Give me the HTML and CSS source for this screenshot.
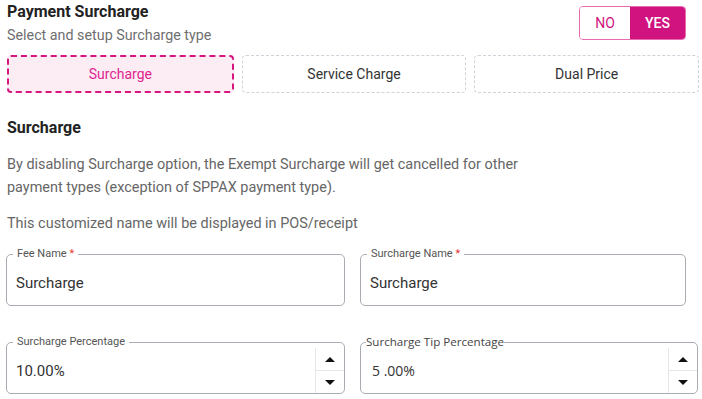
FILE: index.html
```html
<!DOCTYPE html>
<html lang="en">
<head>
    <meta charset="UTF-8">
    <meta name="viewport" content="width=device-width, initial-scale=1.0">
    <title>Payment Surcharge</title>
    <link rel="stylesheet" href="styles.css">
</head>
<body>
    <div id="page">
        <div class="header">
            <div>
                <h2 class="title">Payment Surcharge</h2>
                <p class="subtitle">Select and setup Surcharge type</p>
            </div>
            <div class="toggle">
                <button type="button" class="toggle_btn">NO</button>
                <button type="button" class="toggle_btn active">YES</button>
            </div>
        </div>

        <div class="tabs">
            <div class="tab selected">Surcharge</div>
            <div class="tab">Service Charge</div>
            <div class="tab">Dual Price</div>
        </div>

        <h3 class="section_title">Surcharge</h3>
        <p class="info">By disabling Surcharge option, the Exempt Surcharge will get cancelled for other<br>payment types (exception of SPPAX payment type).</p>
        <p class="info">This customized name will be displayed in POS/receipt</p>

        <div class="fields">
            <fieldset class="field">
                <legend>Fee Name <span class="req">*</span></legend>
                <div class="value">Surcharge</div>
            </fieldset>
            <fieldset class="field narrow">
                <legend>Surcharge Name <span class="req">*</span></legend>
                <div class="value">Surcharge</div>
            </fieldset>
            <fieldset class="field spin">
                <legend>Surcharge Percentage</legend>
                <div class="value">10.00%</div>
                <div class="spinner">
                    <span class="arrow up"></span>
                    <span class="arrow down"></span>
                </div>
            </fieldset>
            <fieldset class="field spin tip">
                <legend>Surcharge Tip Percentage</legend>
                <div class="value">5 .00%</div>
                <div class="spinner">
                    <span class="arrow up"></span>
                    <span class="arrow down"></span>
                </div>
            </fieldset>
        </div>
    </div>
</body>
</html>
```

FILE: styles.css
```css
body, html {
    margin: 0;
    background: #fff;
    font-family: Roboto, "Liberation Sans", sans-serif;
}

#page {
    width: 692px;
    padding-left: 7px;
}

.header {
    display: flex;
    justify-content: space-between;
    align-items: flex-start;
    padding-top: 2px;
}

.title {
    margin: 0;
    font-size: 16px;
    line-height: 20px;
    font-weight: 700;
    color: #222;
}

.subtitle {
    margin: 3px 0 0;
    font-size: 14.3px;
    line-height: 20px;
    color: #6f6f6f;
}

.toggle {
    display: flex;
    margin-top: 4px;
    margin-right: 13px;
    border: 1px solid #e86bb0;
    border-radius: 4px;
    overflow: hidden;
}

.toggle_btn {
    border: none;
    background: #fff;
    color: #d0137f;
    font-family: Roboto, "Liberation Sans", sans-serif;
    font-size: 14px;
    height: 32px;
    width: 50px;
    padding: 0;
}

.toggle_btn.active {
    width: 55px;
    background: #d0137f;
    color: #fff;
    font-weight: 500;
}

.tabs {
    display: flex;
    gap: 8px;
    margin-top: 10px;
}

.tab {
    flex: 1;
    height: 38px;
    box-sizing: border-box;
    display: flex;
    align-items: center;
    justify-content: center;
    border: 1px dashed #cfd3d9;
    border-radius: 4px;
    font-size: 14px;
    color: #333;
}

.tab.selected {
    border: 2px dashed #d6157f;
    background: #fcedf5;
    color: #e0248f;
}

.section_title {
    margin: 25px 0 0;
    font-size: 16px;
    line-height: 20px;
    font-weight: 700;
    color: #222;
}

.info {
    margin: 15px 0 0;
    font-size: 14.45px;
    line-height: 23px;
    color: #666;
}

.info + .info {
    margin-top: 13px;
}

.fields {
    display: grid;
    grid-template-columns: 339px 338px;
    column-gap: 15px;
    row-gap: 30px;
    margin-top: 13px;
    margin-left: -1px;
}

.field {
    position: relative;
    margin: 0;
    padding: 0 9px;
    height: 58px;
    box-sizing: border-box;
    border: 1px solid #a9adb3;
    border-radius: 5px;
    min-width: 0;
}

.field.narrow {
    width: 326px;
}

.field legend {
    padding: 0 4px;
    margin-left: -3px;
    font-size: 11px;
    line-height: 12px;
    color: #555;
}

.req {
    color: #e53935;
}

.value {
    margin-top: 13px;
    font-size: 15px;
    line-height: 20px;
    color: #333;
}

.field.tip legend {
    font-family: "Open Sans", sans-serif;
    font-size: 11.6px;
    color: #444;
    padding: 0;
    margin-left: -4px;
}

.field.tip .value {
    font-family: "Open Sans", sans-serif;
    font-size: 14px;
    padding-left: 2px;
}

.spinner {
    position: absolute;
    right: 0;
    top: 0;
    bottom: 0;
    width: 28px;
    border-left: 1px solid #e4e6e9;
    display: flex;
    flex-direction: column;
}

.arrow {
    flex: 1;
    display: flex;
    align-items: center;
    justify-content: center;
}

.arrow.up {
    border-bottom: 1px solid #e4e6e9;
}

.arrow::before {
    content: "";
    border-left: 5px solid transparent;
    border-right: 5px solid transparent;
}

.arrow.up::before {
    border-bottom: 5px solid #111;
}

.arrow.down::before {
    border-top: 5px solid #111;
}
```
